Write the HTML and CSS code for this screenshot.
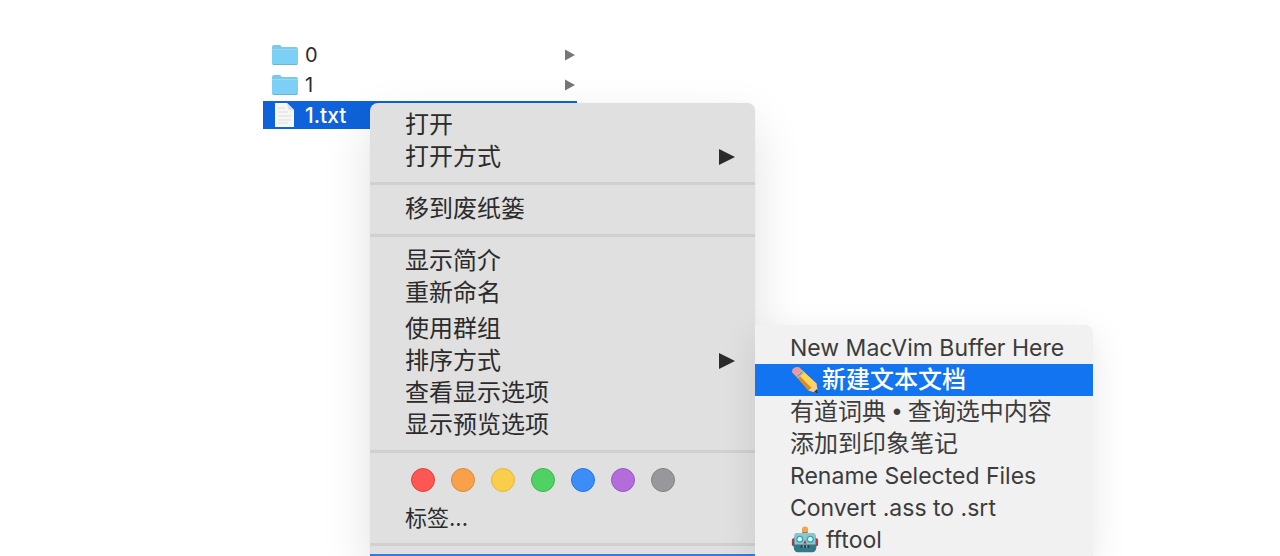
FILE: index.html
```html
<!DOCTYPE html>
<html lang="zh-CN">
  <head>
    <meta charset="UTF-8" />
    <meta name="viewport" content="width=device-width, initial-scale=1.0" />
    <title>1.txt</title>
    <link rel="stylesheet" href="styles.css">
  </head>
  <body>
    <!-- file column -->
    <div class="column">
      <button class="file">
        <svg class="fileIcon" viewBox="0 0 28 24">
          <path d="M1 4q0-2 2-2h6l2 2h14q2 0 2 2v14q0 2-2 2H3q-2 0-2-2z" fill="#7cc8e8" />
          <path d="M1 7h26v13q0 1.500-2 1.500H3q-2 0-2-1.500z" fill="#7dd0f5" />
          <path d="M1 6.500h26" stroke="#98d9f3" />
          <path d="M2 21.500h24" stroke="#6bb4d6" />
        </svg>
        <span>0</span>
        <svg class="fileArrow" viewBox="0 0 10 12"><path d="M0 0.500L10 6L0 11.500z" /></svg>
      </button>
      <button class="file">
        <svg class="fileIcon" viewBox="0 0 28 24">
          <path d="M1 4q0-2 2-2h6l2 2h14q2 0 2 2v14q0 2-2 2H3q-2 0-2-2z" fill="#7cc8e8" />
          <path d="M1 7h26v13q0 1.500-2 1.500H3q-2 0-2-1.500z" fill="#7dd0f5" />
          <path d="M1 6.500h26" stroke="#98d9f3" />
          <path d="M2 21.500h24" stroke="#6bb4d6" />
        </svg>
        <span>1</span>
        <svg class="fileArrow" viewBox="0 0 10 12"><path d="M0 0.500L10 6L0 11.500z" /></svg>
      </button>
      <button class="file selected">
        <svg class="fileIcon" viewBox="0 0 28 24">
          <path d="M4 0h12l7 7v17H4z" fill="#f6f6f3" />
          <path d="M16 0l7 7h-4q-2 0-2-2z" fill="#dfe2e4" />
          <path d="M7 5h7M7 9h10M7 13h13M7 17h13M7 20h10" stroke="#dcdcd8" fill="none" />
        </svg>
        <span>1.txt</span>
      </button>
    </div>

    <!-- context menu -->
    <div class="menu mainMenu">
      <button class="item">打开</button>
      <button class="item">打开方式
        <svg class="arrow" viewBox="0 0 16 16"><path d="M0 0L16 8L0 16z" /></svg>
      </button>
      <hr class="line" />
      <button class="item">移到废纸篓</button>
      <hr class="line" />
      <button class="item">显示简介</button>
      <button class="item">重新命名</button>
      <div class="group">
        <button class="item">使用群组</button>
        <button class="item">排序方式
          <svg class="arrow" viewBox="0 0 16 16"><path d="M0 0L16 8L0 16z" /></svg>
        </button>
        <button class="item">查看显示选项</button>
        <button class="item">显示预览选项</button>
      </div>
      <hr class="line" />
      <div class="tags">
        <button class="tag red" aria-label="红色"></button>
        <button class="tag orange" aria-label="橙色"></button>
        <button class="tag yellow" aria-label="黄色"></button>
        <button class="tag green" aria-label="绿色"></button>
        <button class="tag blue" aria-label="蓝色"></button>
        <button class="tag purple" aria-label="紫色"></button>
        <button class="tag gray" aria-label="灰色"></button>
      </div>
      <button class="item tagLabel">标签...</button>
      <hr class="line" />
      <div class="opened"></div>
    </div>

    <!-- submenu -->
    <div class="menu subMenu">
      <button class="item latin">New MacVim Buffer Here</button>
      <button class="item active">
        <svg class="emoji" viewBox="0 0 32 32">
          <path d="M2 7L9 1L29 20L31 31L20 28z" fill="#f5b929" />
          <path d="M7 12L13 5L29 20L25 25z" fill="#ffd45a" />
          <path d="M4 10L20 28L24 26L8 9z" fill="#dc8d1d" />
          <path d="M1 7Q1 1 8 1L12 5L5 11z" fill="#ef969e" />
          <path d="M5 11L12 5L15 8L8 14z" fill="#b9b9b8" />
          <path d="M6.500 12.500L13.500 6.500" stroke="#777" />
          <path d="M20 28L29 20L31 31z" fill="#efcfa1" />
          <path d="M26 30L30 26L31 31z" fill="#333" />
        </svg>新建文本文档
      </button>
      <button class="item mixed">有道词典 • 查询选中内容</button>
      <button class="item">添加到印象笔记</button>
      <button class="item latin">Rename Selected Files</button>
      <button class="item latin">Convert .ass to .srt</button>
      <button class="item latin">
        <svg class="emoji robot" viewBox="0 0 32 32">
          <rect x="13" y="3" width="6" height="7" fill="#7a6a5a" />
          <circle cx="16" cy="4" r="3.500" fill="#efa64c" />
          <rect x="1" y="14" width="5" height="9" rx="2" fill="#a83d49" />
          <rect x="26" y="14" width="5" height="9" rx="2" fill="#a83d49" />
          <path d="M7 8h18q3 0 3 4l1 11q0 7-5 7H8q-5 0-5-7l1-11q0-4 3-4z" fill="#34798a" />
          <path d="M7 8h18q3 0 3 4v9H4v-9q0-4 3-4z" fill="#8fc5c9" />
          <circle cx="10" cy="15" r="4" fill="#2aa6bd" />
          <circle cx="22" cy="15" r="4" fill="#2aa6bd" />
          <circle cx="10" cy="15" r="2.500" fill="#e9ffff" />
          <circle cx="22" cy="15" r="2.500" fill="#e9ffff" />
          <path d="M16 16l2 4h-4z" fill="#a33943" />
          <rect x="11" y="22" width="10" height="3" rx="1" fill="#263f49" />
          <path d="M14 22v3M18 22v3" stroke="#c7d6d5" />
        </svg>fftool
      </button>
    </div>
  </body>
</html>
```

FILE: styles.css
```css
* {
  box-sizing: border-box;
}
body {
  margin: 0;
  min-height: 100vh;
  padding-top: 41px;
  position: relative;
  overflow: hidden;
  background-color: #fff;
  font-family: Inter, "Noto Sans CJK SC", sans-serif;
  color: #2b2b2b;
}
button {
  border: none;
  background: none;
  padding: 0;
  font-family: inherit;
  color: inherit;
  text-align: left;
}

/* file column */
.column {
  display: flex;
  flex-direction: column;
  gap: 2px;
  width: 314px;
  margin-left: 263px;
}
.file {
  display: flex;
  align-items: center;
  gap: 6px;
  height: 28px;
  padding: 0 2px 0 8px;
  font-size: 20px;
}
.fileIcon {
  width: 28px;
  height: 24px;
}
.fileArrow {
  width: 10px;
  height: 12px;
  margin-left: auto;
  fill: #777;
}
.selected {
  background-color: #0f62d9;
  color: #fff;
  font-size: 21px;
  font-weight: 500;
}

/* menus */
.menu {
  position: absolute;
  bottom: 0;
  display: flex;
  flex-direction: column;
}
.mainMenu {
  top: 103px;
  left: 370px;
  width: 385px;
  padding-top: 6px;
  border-radius: 8px 8px 0 0;
  background-color: #e0e0e0;
  box-shadow: 0 20px 50px rgba(0, 0, 0, 0.12), 0 0 2px rgba(0, 0, 0, 0.06);
}
.subMenu {
  top: 325px;
  left: 755px;
  width: 338px;
  padding-top: 7px;
  border-radius: 0 8px 0 0;
  background-color: #f1f1f1;
  color: #3c3c3c;
  box-shadow: 0 10px 36px rgba(0, 0, 0, 0.1);
}
.item {
  display: flex;
  align-items: center;
  height: 32px;
  padding: 0 20px 0 35px;
  font-size: 24px;
  line-height: 32px;
  white-space: nowrap;
}
.latin {
  font-size: 23px;
}
.mixed {
  font-family: "Liberation Sans", "Noto Sans CJK SC", sans-serif;
}
.active {
  background-color: #1274f0;
  color: #fff;
  font-weight: 500;
}
.arrow {
  width: 16px;
  height: 16px;
  margin-left: auto;
  fill: #2b2b2b;
}
.line {
  width: 100%;
  height: 3px;
  margin: 9px 0 8px;
  border: none;
  background-color: #d0d0d0;
}
.group {
  display: flex;
  flex-direction: column;
  margin-top: 4px;
}
.emoji {
  width: 30px;
  height: 28px;
  margin-right: 2px;
}
.robot {
  margin-right: 6px;
}

/* tags */
.tags {
  display: flex;
  gap: 16px;
  padding: 7px 41px 10px;
}
.tag {
  width: 24px;
  height: 24px;
  border: 1px solid;
  border-radius: 50%;
}
.red {
  background-color: #fc5753;
  border-color: #e2423f;
}
.orange {
  background-color: #f9a04a;
  border-color: #df8a38;
}
.yellow {
  background-color: #f9ce4c;
  border-color: #e3b83c;
}
.green {
  background-color: #50d164;
  border-color: #3bb94e;
}
.blue {
  background-color: #3d8df8;
  border-color: #2a76dd;
}
.purple {
  background-color: #b36ddb;
  border-color: #9c58c3;
}
.gray {
  background-color: #98989c;
  border-color: #838386;
}
.tagLabel {
  font-size: 22px;
}
.opened {
  flex: 1;
  background-color: #2f7be6;
}
```
